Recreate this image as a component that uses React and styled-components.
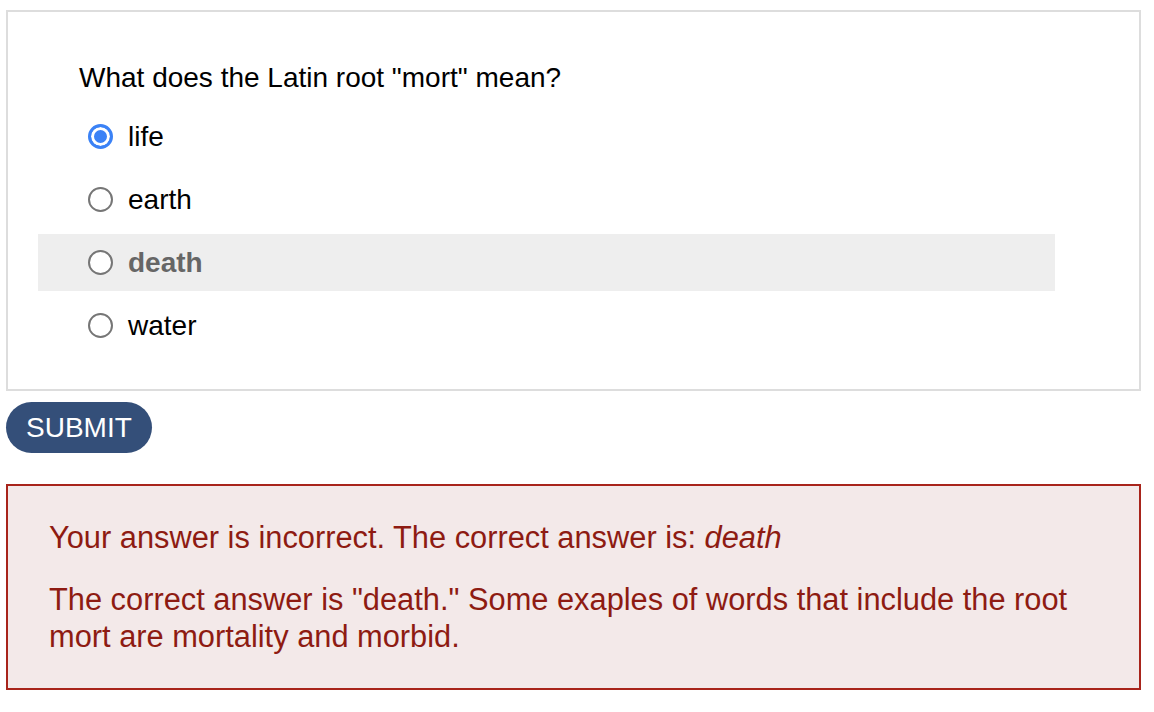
import React, { useState } from 'react';
import styled, { createGlobalStyle } from 'styled-components';

const GlobalStyle = createGlobalStyle`
  body {
    margin: 0;
    background: #ffffff;
    font-family: "Liberation Sans", Arial, Helvetica, sans-serif;
  }
`;

const options = ['life', 'earth', 'death', 'water'];

const App = () => {
  const [selected, setSelected] = useState('life');
  const correct = 'death';

  return (
    <Page>
      <GlobalStyle />
      <QuizBox>
        <Question>What does the Latin root "mort" mean?</Question>
        <OptionList>
          {options.map((opt) => (
            <OptionRow key={opt} $correct={opt === correct} onClick={() => setSelected(opt)}>
              <Radio $checked={selected === opt} />
              <OptionLabel $correct={opt === correct}>{opt}</OptionLabel>
            </OptionRow>
          ))}
        </OptionList>
      </QuizBox>
      <SubmitButton>SUBMIT</SubmitButton>
      <Feedback>
        <FeedbackText>
          Your answer is incorrect. The correct answer is: <em>death</em>
        </FeedbackText>
        <FeedbackText>
          The correct answer is "death." Some exaples of words that include the root mort are
          mortality and morbid.
        </FeedbackText>
      </Feedback>
    </Page>
  );
};

const Page = styled.div`
  width: 1135px;
  padding: 10px 0 0 6px;
  display: flex;
  flex-direction: column;
  align-items: flex-start;
`;

const QuizBox = styled.div`
  box-sizing: border-box;
  width: 1135px;
  height: 381px;
  border: 2px solid #dddddd;
  padding: 50px 84px 0 30px;
`;

const Question = styled.div`
  font-size: 28px;
  line-height: 32px;
  color: #000;
  margin-left: 41px;
`;

const OptionList = styled.div`
  margin-top: 14px;
  display: flex;
  flex-direction: column;
  gap: 6px;
`;

const OptionRow = styled.div`
  height: 57px;
  display: flex;
  align-items: center;
  gap: 15px;
  padding-left: 50px;
  background: ${(p) => (p.$correct ? '#eeeeee' : 'transparent')};
  cursor: pointer;
`;

const Radio = styled.span`
  box-sizing: border-box;
  width: 25px;
  height: 25px;
  border-radius: 50%;
  flex-shrink: 0;
  border: ${(p) => (p.$checked ? '3px solid #3b82f6' : '2px solid #767676')};
  background: ${(p) => (p.$checked ? '#3b82f6' : '#ffffff')};
  box-shadow: ${(p) => (p.$checked ? 'inset 0 0 0 3px #ffffff' : 'none')};
`;

const OptionLabel = styled.span`
  font-size: 28px;
  line-height: 32px;
  color: ${(p) => (p.$correct ? '#666666' : '#000000')};
  font-weight: ${(p) => (p.$correct ? 'bold' : 'normal')};
  margin-top: 1px;
`;

const SubmitButton = styled.button`
  margin-top: 11px;
  height: 51px;
  padding: 0 20px;
  border: none;
  border-radius: 26px;
  background: #344f79;
  color: #ffffff;
  font-family: "Liberation Sans", Arial, sans-serif;
  font-size: 28px;
  cursor: pointer;
`;

const Feedback = styled.div`
  box-sizing: border-box;
  width: 1135px;
  margin-top: 31px;
  border: 2px solid #a8241b;
  background: #f3e9e9;
  padding: 33px 60px 33px 41px;
`;

const FeedbackText = styled.p`
  margin: 0;
  font-size: 30.8px;
  line-height: 37px;
  color: #8e1b12;

  & + & {
    margin-top: 25px;
  }
`;

export default App;
